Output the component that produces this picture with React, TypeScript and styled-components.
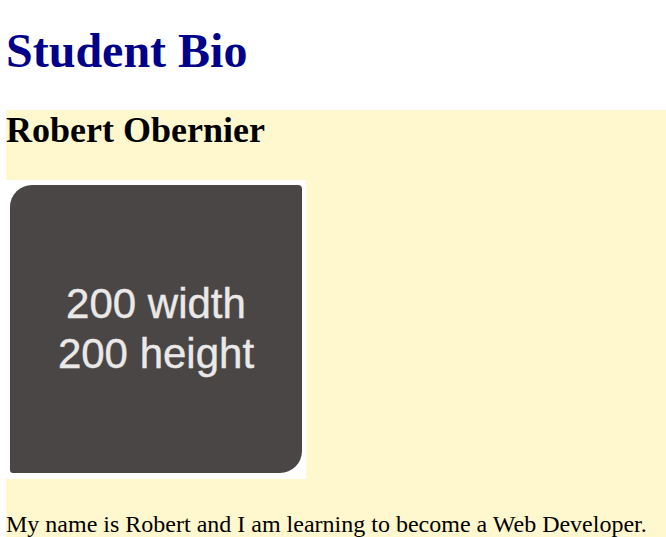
import React from "react";
import styled, { createGlobalStyle } from "styled-components";

const GlobalStyle = createGlobalStyle`
  html, body {
    margin: 0;
    padding: 0;
    background: #ffffff;
  }
  body {
    font-family: "Liberation Serif", "Times New Roman", serif;
    color: #000000;
  }
`;

const Page = styled.main`
  display: flex;
  flex-direction: column;
  padding: 0 0 0 6px;
`;

const Title = styled.h1`
  margin: 24px 0 32px;
  font-size: 48px;
  line-height: 54px;
  font-weight: bold;
  color: #000088;
`;

const Bio = styled.section`
  display: flex;
  flex-direction: column;
  align-items: flex-start;
  background: #fff8cf;
`;

const Name = styled.h2`
  margin: 0;
  font-size: 36px;
  line-height: 41px;
  font-weight: bold;
`;

const Photo = styled.figure`
  margin: 29px 0 0;
  width: 300px;
  height: 299px;
  box-sizing: border-box;
  padding: 5px 4px 6px;
  background: #ffffff;
  display: flex;
`;

const Tile = styled.div`
  flex: 1;
  background: #4a4646;
  border-radius: 22px 4px 22px 3px;
  display: flex;
  align-items: center;
  justify-content: center;
  text-align: center;
  font-family: "Liberation Sans", Arial, sans-serif;
  font-size: 42px;
  line-height: 50px;
  color: #ebe9e8;
  -webkit-text-stroke: 0.4px #ebe9e8;
`;

const Text = styled.p`
  margin: 31px 0 24px;
  font-size: 24px;
  line-height: 28px;
`;

export default function App() {
  return (
    <>
      <GlobalStyle />
      <Page>
        <Title>Student Bio</Title>
        <Bio>
          <Name>Robert Obernier</Name>
          <Photo>
            <Tile>
              200 width
              <br />
              200 height
            </Tile>
          </Photo>
          <Text>My name is Robert and I am learning to become a Web Developer.</Text>
        </Bio>
      </Page>
    </>
  );
}
